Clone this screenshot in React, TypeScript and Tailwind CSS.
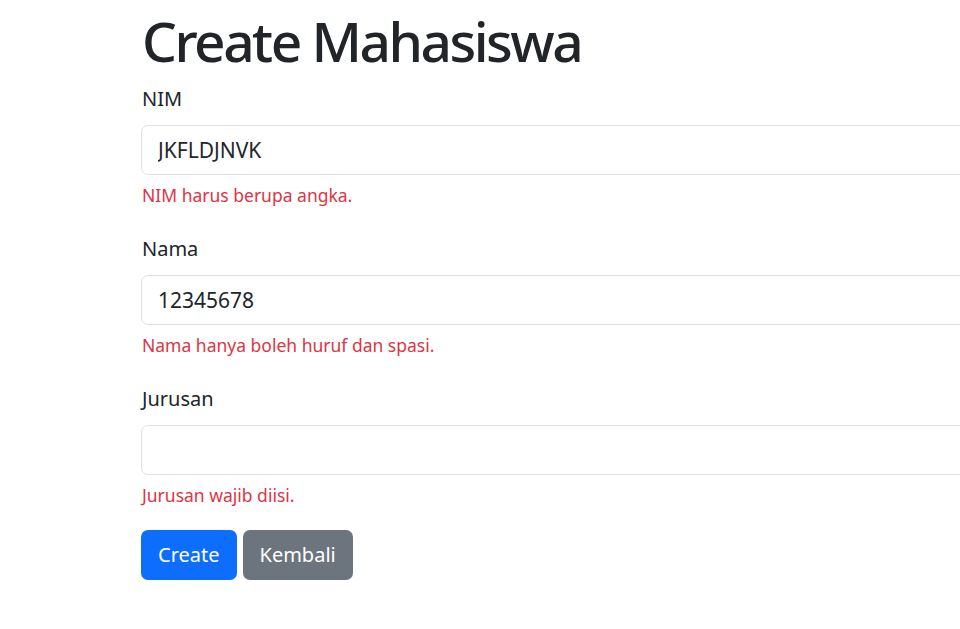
import React from "react";

const groups = [
  { label: "NIM", value: "JKFLDJNVK", error: "NIM harus berupa angka.", last: false },
  { label: "Nama", value: "12345678", error: "Nama hanya boleh huruf dan spasi.", last: false },
  { label: "Jurusan", value: "", error: "Jurusan wajib diisi.", last: true },
];

export default function App() {
  return (
    <div
      className="w-[960px] h-[629px] overflow-hidden bg-white text-[#212529]"
      style={{ fontFamily: '"Noto Sans", "Open Sans", sans-serif' }}
    >
      <div className="pl-[141px] w-[1200px]">
        <h1 className="mt-[6px] text-[55px] leading-[70px] font-medium pl-[1px] tracking-[-2.5px]">Create Mahasiswa</h1>
        <form className="mt-[8px]">
          {groups.map((g) => (
            <div key={g.label} className={g.last ? "mb-[22px]" : "mb-[26px]"}>
              <label className="block text-[20px] leading-[30px] h-[30px] mb-[11px] pl-[1px]">{g.label}</label>
              <input
                readOnly
                value={g.value}
                className="block w-[1000px] h-[50px] border border-[#dee2e6] rounded-[7px] px-[16px] text-[21px] text-[#212529] bg-white outline-none"
                style={{ fontFamily: '"Noto Sans", "Open Sans", sans-serif' }}
              />
              <div className="mt-[7px] text-[17.5px] leading-[26px] h-[26px] text-[#dc3545] pl-[1px]">{g.error}</div>
            </div>
          ))}
          <div className="flex gap-[6px]">
            <button
              type="button"
              className="h-[50px] px-[17px] rounded-[7px] bg-[#0d6efd] text-white text-[20px]"
            >
              Create
            </button>
            <button
              type="button"
              className="h-[50px] px-[17px] rounded-[7px] bg-[#6c757d] text-white text-[20px]"
            >
              Kembali
            </button>
          </div>
        </form>
      </div>
    </div>
  );
}
